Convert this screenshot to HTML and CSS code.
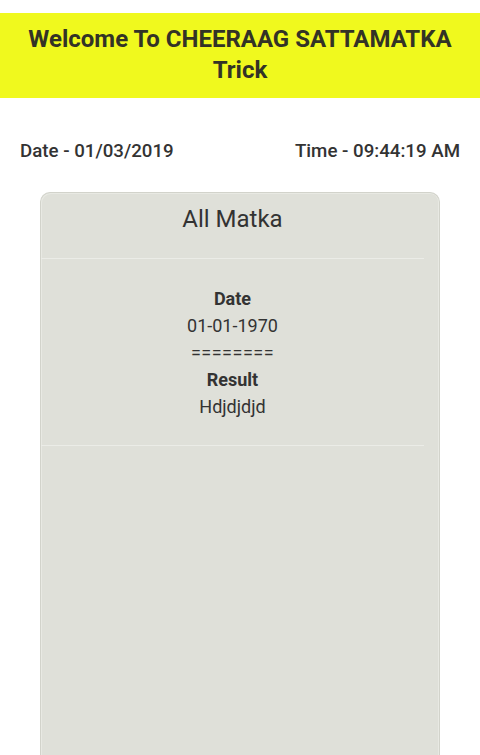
FILE: index.html
```html
<!DOCTYPE html>
<html lang="en">
<head>
  <meta charset="UTF-8">
  <meta name="viewport" content="width=device-width, initial-scale=1.0">
  <title>CHEERAAG SATTAMATKA Trick</title>
  <link rel="stylesheet" href="styles.css">
</head>
<body>
  <div class="header">
    <h1>Welcome To CHEERAAG SATTAMATKA Trick</h1>
  </div>

  <div class="clock">
    <span>Date - 01/03/2019</span>
    <span>Time - 09:44:19 AM</span>
  </div>

  <div class="card">
    <div class="card-title">All Matka</div>
    <div class="result">
      <div class="label">Date</div>
      <div>01-01-1970</div>
      <div class="sep">========</div>
      <div class="label">Result</div>
      <div>Hdjdjdjd</div>
    </div>
  </div>
</body>
</html>
```

FILE: styles.css
```css
body {
  font-family: Roboto, "Liberation Sans", sans-serif;
  margin: 0;
  padding: 0;
  background-color: #ffffff;
  color: #333333;
}

.header {
  margin-top: 13px;
  background-color: #f0f91e;
  padding: 11px 20px 12px;
  text-align: center;
}

.header h1 {
  margin: 0;
  font-size: 24px;
  line-height: 31px;
  font-weight: bold;
  color: #333326;
}

.clock {
  display: flex;
  justify-content: space-between;
  padding: 0 20px;
  margin-top: 43px;
  font-size: 18.7px;
  line-height: 20px;
  font-weight: 500;
}

.card {
  width: 398px;
  height: 562px;
  margin: 31px auto 0;
  background-color: #dfe0d9;
  border: 1px solid #d2d3cb;
  border-bottom: none;
  border-radius: 10px 10px 0 0;
  box-shadow: inset 1px 1px 0 #e8e9e3, inset -1px 0 0 #e8e9e3;
}

.card-title {
  text-align: center;
  font-size: 24px;
  line-height: 26px;
  padding: 13px 0 26px;
  border-bottom: 1px solid #ebece7;
  margin-right: 15px;
}

.result {
  text-align: center;
  font-size: 18px;
  line-height: 27px;
  padding: 26px 0 25px;
  border-bottom: 1px solid #ebece7;
  margin-right: 15px;
}

.label {
  font-weight: bold;
}

.sep {
  letter-spacing: 0.5px;
}
```
